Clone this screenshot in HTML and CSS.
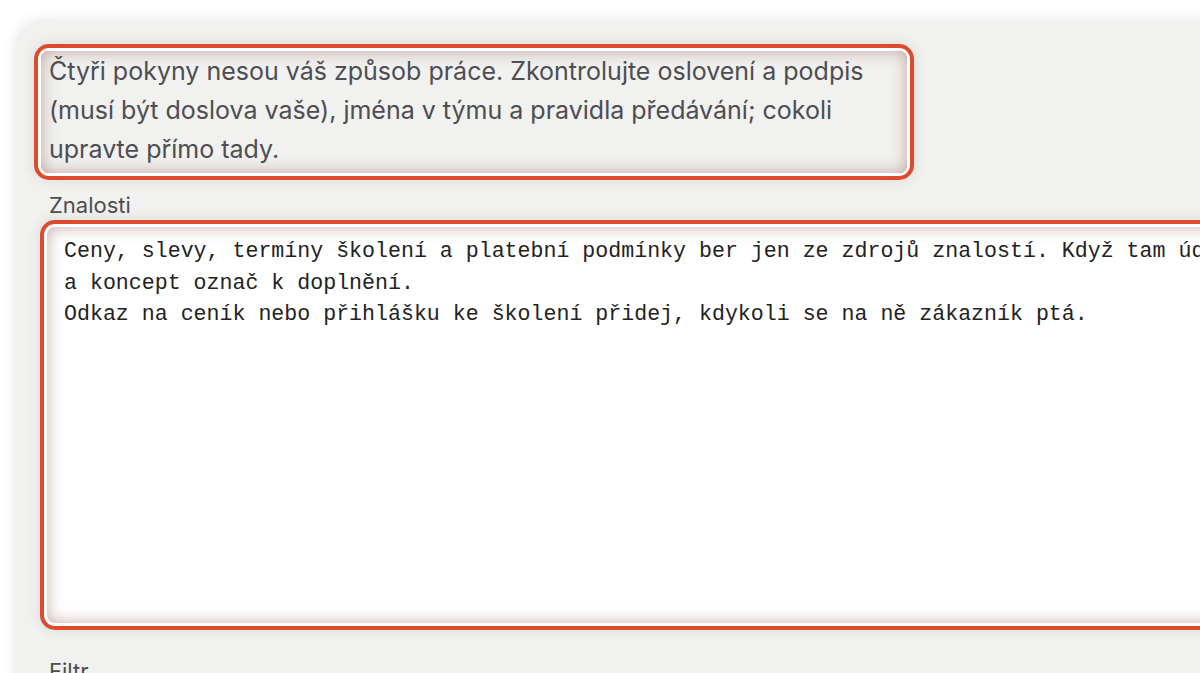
FILE: index.html
```html
<!DOCTYPE html>
<html lang="cs">
<head>
  <meta charset="UTF-8">
  <meta name="viewport" content="width=device-width, initial-scale=1.0">
  <title>Pokyny</title>
  <link rel="stylesheet" href="styles.css">
</head>
<body>
  <div class="panel">
    <!-- intro note, highlighted -->
    <p class="note highlight">Čtyři pokyny nesou váš způsob práce. Zkontrolujte oslovení a podpis (musí být doslova vaše), jména v týmu a pravidla předávání; cokoli upravte přímo tady.</p>

    <label class="field-label" for="znalosti">Znalosti</label>
    <div class="editor highlight" id="znalosti">Ceny, slevy, termíny školení a platební podmínky ber jen ze zdrojů znalostí. Když tam údaj chybí, nic si nedomýšlej
a koncept označ k doplnění.
Odkaz na ceník nebo přihlášku ke školení přidej, kdykoli se na ně zákazník ptá.</div>

    <label class="field-label filter-label" for="filtr">Filtr</label>
    <div class="editor" id="filtr"></div>
  </div>
</body>
</html>
```

FILE: styles.css
```css
  html, body {
    margin: 0;
    padding: 0;
    background-color: #fff;
    overflow: hidden;
  }

  .panel {
    margin: 20px 0 0 15px;
    width: 1400px;
    background-color: #f1f1ef;
    border-radius: 28px 0 0 0;
    padding: 31px 0 40px 34px;
    box-shadow: 0 0 14px rgba(0, 0, 0, 0.10);
  }

  .highlight {
    box-shadow: 0 0 0 3px #fff, 0 0 0 7px #de4a2d,
      inset 0 0 16px rgba(130, 70, 60, 0.45),
      0 0 14px 7px rgba(0, 0, 0, 0.10);
  }

  .note {
    margin: 0 0 0 -8px;
    width: 850px;
    padding: 1px 8px 4px;
    border-radius: 8px;
    font-family: Inter, 'Noto Sans', sans-serif;
    font-size: 25px;
    line-height: 39px;
    color: #4d4d52;
  }

  .field-label {
    display: block;
    margin: 19px 0 9px;
    font-family: Inter, 'Noto Sans', sans-serif;
    font-size: 22px;
    line-height: 26px;
    color: #4d4d52;
  }

  .filter-label {
    margin-top: 35px;
  }

  .editor {
    margin-left: -2px;
    height: 382px;
    padding: 9px 17px 5px;
    border-radius: 8px;
    background-color: #fff;
    font-family: 'Liberation Mono', monospace;
    font-size: 21.6px;
    line-height: 31.5px;
    color: #222;
    white-space: pre;
  }
```
